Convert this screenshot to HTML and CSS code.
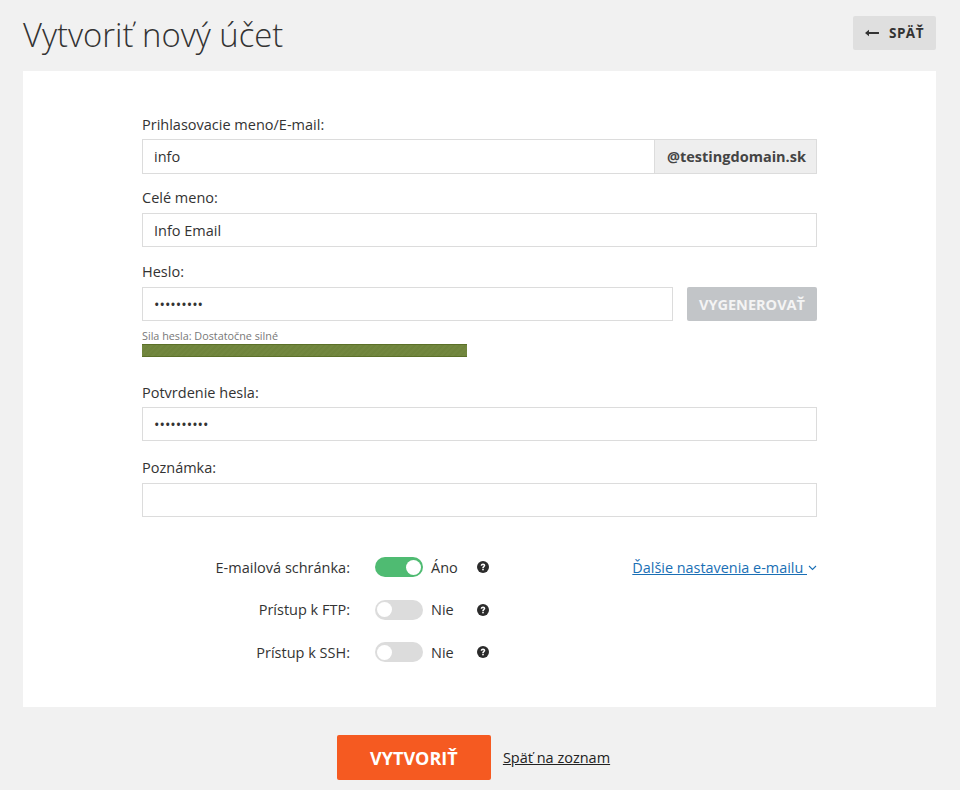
FILE: index.html
```html
<!DOCTYPE html>
<html lang="sk">
<head>
<meta charset="utf-8">
<title>Vytvoriť nový účet</title>
<link rel="stylesheet" href="styles.css">
</head>
<body>
<div class="page">
  <header class="head">
    <h1 class="title">Vytvoriť nový účet</h1>
    <a class="back" href="#">
      <svg class="back-icon" width="14" height="8" viewBox="0 0 14 8"><path d="M0 4 L4 0.8 V3.1 H14 V4.9 H4 V7.2 Z" fill="#333"/></svg>
      <span>SPÄŤ</span>
    </a>
  </header>
  <main class="card">
    <form class="form">
      <div class="field field-user">
        <label class="label">Prihlasovacie meno/E-mail:</label>
        <div class="group">
          <input class="input joined" type="text" value="info">
          <span class="addon">@testingdomain.sk</span>
        </div>
      </div>
      <div class="field">
        <label class="label">Celé meno:</label>
        <input class="input" type="text" value="Info Email">
      </div>
      <div class="field field-pass">
        <label class="label">Heslo:</label>
        <div class="group gap">
          <input class="input" type="password" value="123456789">
          <button class="gen" type="button">VYGENEROVAŤ</button>
        </div>
        <div class="strength-text">Sila hesla: Dostatočne silné</div>
        <div class="strength-bar"></div>
      </div>
      <div class="field field-confirm">
        <label class="label">Potvrdenie hesla:</label>
        <input class="input" type="password" value="1234567890">
      </div>
      <div class="field">
        <label class="label">Poznámka:</label>
        <input class="input" type="text">
      </div>
      <div class="options">
        <div class="opt">
          <span class="opt-label">E-mailová schránka:</span>
          <span class="toggle on"><span class="knob"></span></span>
          <span class="opt-val">Áno</span>
          <svg class="help" width="12" height="12" viewBox="0 0 12 12"><circle cx="6" cy="6" r="6" fill="#2b2b2b"/><path d="M3.7 4.7 C3.7 3.2 4.8 2.4 6 2.4 C7.3 2.4 8.3 3.2 8.3 4.5 C8.3 5.8 6.8 6 6.8 7.1 H5.2 C5.2 5.4 6.7 5.3 6.7 4.6 C6.7 4.2 6.4 3.9 6 3.9 C5.5 3.9 5.2 4.3 5.2 4.7 Z" fill="#fff"/><rect x="5.2" y="7.7" width="1.6" height="1.6" fill="#fff"/></svg>
          <a class="more" href="#"><span class="more-text">Ďalšie nastavenia e-mailu </span><svg class="chev" width="9" height="6" viewBox="0 0 9 6"><path d="M1 1 L4.5 4.5 L8 1" fill="none" stroke="#1a6fb5" stroke-width="1.1"/></svg></a>
        </div>
        <div class="opt">
          <span class="opt-label">Prístup k FTP:</span>
          <span class="toggle"><span class="knob"></span></span>
          <span class="opt-val">Nie</span>
          <svg class="help" width="12" height="12" viewBox="0 0 12 12"><circle cx="6" cy="6" r="6" fill="#2b2b2b"/><path d="M3.7 4.7 C3.7 3.2 4.8 2.4 6 2.4 C7.3 2.4 8.3 3.2 8.3 4.5 C8.3 5.8 6.8 6 6.8 7.1 H5.2 C5.2 5.4 6.7 5.3 6.7 4.6 C6.7 4.2 6.4 3.9 6 3.9 C5.5 3.9 5.2 4.3 5.2 4.7 Z" fill="#fff"/><rect x="5.2" y="7.7" width="1.6" height="1.6" fill="#fff"/></svg>
        </div>
        <div class="opt">
          <span class="opt-label">Prístup k SSH:</span>
          <span class="toggle"><span class="knob"></span></span>
          <span class="opt-val">Nie</span>
          <svg class="help" width="12" height="12" viewBox="0 0 12 12"><circle cx="6" cy="6" r="6" fill="#2b2b2b"/><path d="M3.7 4.7 C3.7 3.2 4.8 2.4 6 2.4 C7.3 2.4 8.3 3.2 8.3 4.5 C8.3 5.8 6.8 6 6.8 7.1 H5.2 C5.2 5.4 6.7 5.3 6.7 4.6 C6.7 4.2 6.4 3.9 6 3.9 C5.5 3.9 5.2 4.3 5.2 4.7 Z" fill="#fff"/><rect x="5.2" y="7.7" width="1.6" height="1.6" fill="#fff"/></svg>
        </div>
      </div>
    </form>
  </main>
  <footer class="actions">
    <button class="create" type="button">VYTVORIŤ</button>
    <a class="back-link" href="#">Späť na zoznam</a>
  </footer>
</div>
</body>
</html>
```
FILE: styles.css
```css
* { box-sizing: border-box; }
html, body { margin: 0; height: 100%; }
body {
  background: #f1f1f1;
  font-family: "Open Sans", sans-serif;
  font-size: 14.5px;
  color: #333;
  overflow: hidden;
}
.page { padding: 16px 24px 0 23px; }
.head {
  display: flex;
  justify-content: space-between;
  align-items: flex-start;
  height: 55px;
}
.title {
  margin: 0;
  font-size: 32.85px;
  font-weight: 300;
  line-height: 38px;
  color: #333;
}
.back {
  display: flex;
  align-items: center;
  gap: 10px;
  width: 83px;
  height: 34px;
  padding: 0 12px;
  background: #dfdfdf;
  border-radius: 2px;
  color: #333;
  font-size: 13.5px;
  font-weight: 700;
  letter-spacing: 0.5px;
  text-decoration: none;
}
.card {
  background: #fff;
  height: 636px;
  padding: 44px 119px 0;
}
.field { margin-bottom: 15px; }
.field-user { margin-bottom: 14px; }
.field-user .label { margin-bottom: 4px; }
.field-user .input, .field-user .addon { height: 35px; }
.field-pass { margin-bottom: 26px; }
.field-confirm { margin-bottom: 17px; }
.field-confirm .label { margin-bottom: 4px; }
.label {
  display: block;
  height: 20px;
  margin-bottom: 5px;
  line-height: 20px;
  color: #333;
}
.group { display: flex; }
.gap { gap: 14px; }
.input {
  display: block;
  width: 100%;
  min-width: 0;
  flex: 1;
  height: 34px;
  padding: 0 11px;
  border: 1px solid #dcdcdc;
  border-radius: 0;
  background: #fff;
  font-family: inherit;
  font-size: 14.5px;
  color: #333;
  outline: none;
}
.joined { border-right: 0; }
.addon {
  display: flex;
  align-items: center;
  width: 163px;
  padding: 0 12px;
  background: #eee;
  border: 1px solid #dcdcdc;
  font-weight: 700;
  color: #444;
}
.gen {
  width: 130px;
  height: 34px;
  padding: 0;
  border: 0;
  border-radius: 2px;
  background: #c2c5c8;
  color: #f4f4f4;
  font-family: inherit;
  font-size: 14.5px;
  font-weight: 700;
}
.strength-text {
  margin-top: 8px;
  font-size: 10.8px;
  line-height: 14px;
  color: #777;
}
.strength-bar {
  width: 325px;
  height: 13px;
  margin-top: 1px;
  background: repeating-linear-gradient(135deg, #6f843c 0 2px, #72873f 2px 4px);
  border: 1px solid #5b7028;
  border-width: 1px 0;
}
.options { margin-top: 40px; }
.opt {
  display: flex;
  align-items: center;
  height: 20px;
  margin-bottom: 22.5px;
}
.opt-label {
  width: 208px;
  text-align: right;
  margin-right: 25px;
}
.toggle {
  position: relative;
  display: block;
  width: 48px;
  height: 20px;
  border-radius: 10px;
  background: #dcdcdc;
}
.toggle.on { background: #4fbb72; }
.knob {
  position: absolute;
  top: 2.5px;
  left: 2px;
  width: 15px;
  height: 15px;
  border-radius: 50%;
  background: #fff;
}
.on .knob { left: 31px; }
.opt-val { width: 46px; margin-left: 8px; }
.help { flex: none; }
.more {
  display: flex;
  align-items: center;
  gap: 1px;
  margin-left: auto;
  font-size: 14.42px;
  color: #1a6fb5;
  text-decoration: none;
}
.more-text { text-decoration: underline; white-space: pre; }
.chev { margin-top: 1px; }
.actions {
  display: flex;
  align-items: center;
  justify-content: center;
  gap: 12px;
  margin-top: 28px;
  padding-right: 12px;
}
.create {
  width: 154px;
  height: 45px;
  padding: 0;
  border: 0;
  border-radius: 2px;
  background: #f55a21;
  color: #fff;
  font-family: inherit;
  font-size: 18px;
  font-weight: 700;
}
.back-link { color: #222; text-decoration: underline; }
```
